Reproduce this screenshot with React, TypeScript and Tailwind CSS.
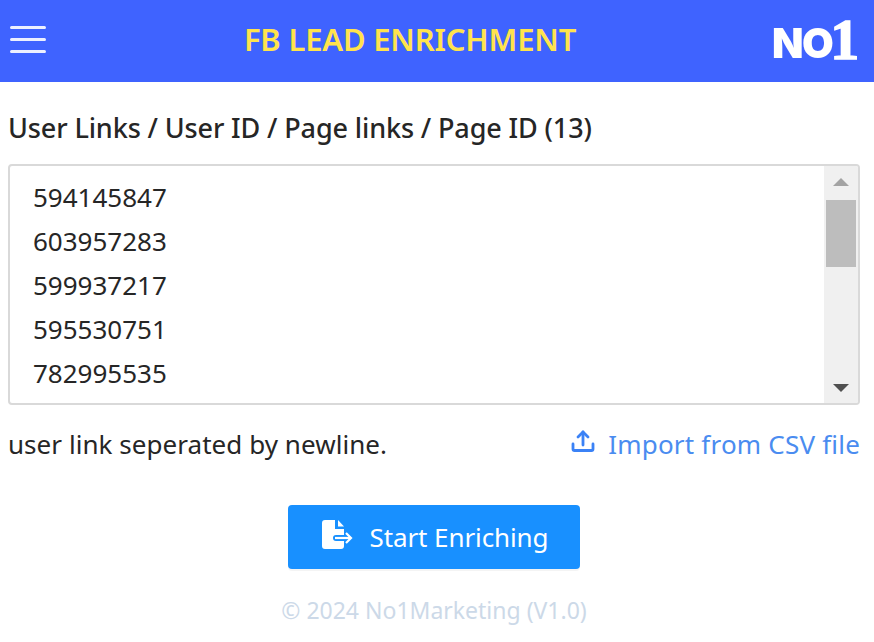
const ids = ["594145847", "603957283", "599937217", "595530751", "782995535"]

function Logo() {
  return (
    <div className="w-[85px] mr-[17px] flex items-end text-white blur-[0.7px] select-none h-[46px]">
      <span className="text-[41px] leading-[44px] font-black font-['Inter',sans-serif] tracking-[-1.5px] mb-[-1px]">NO</span>
      <span className="text-[58px] leading-[50px] font-bold font-['Liberation_Serif',serif] -ml-[2px] mb-[-1px] [-webkit-text-stroke:1.5px_white]">1</span>
    </div>
  )
}

function Scrollbar() {
  return (
    <div className="w-[34px] bg-[#f0f0f0] flex flex-col items-center">
      <div className="h-[34px] w-full flex items-center justify-center">
        <div className="w-0 h-0 border-x-[8px] border-x-transparent border-b-[8px] border-b-[#a3a3a3] -mt-[3px]" />
      </div>
      <div className="w-[30px] h-[67px] bg-[#bdbdbd]" />
      <div className="flex-1" />
      <div className="h-[34px] w-full flex items-center justify-center">
        <div className="w-0 h-0 border-x-[8px] border-x-transparent border-t-[8px] border-t-[#505050] mt-[3px]" />
      </div>
    </div>
  )
}

export default function App() {
  return (
    <div className="w-[874px] h-[642px] bg-white font-['Noto_Sans',sans-serif] text-[#262626] overflow-hidden">
      <header className="h-[82px] bg-[#3f63ff] flex items-center justify-between pl-[10px] pr-0">
        <div className="w-[36px] flex flex-col gap-[9px] -mt-[4px] blur-[0.4px]">
          <span className="h-[3px] bg-white/90 rounded-full" />
          <span className="h-[3px] bg-white/90 rounded-full" />
          <span className="h-[3px] bg-white/90 rounded-full" />
        </div>
        <h1 className="text-[31px] leading-[40px] font-semibold text-[#ffe34d] tracking-[-0.2px] -mt-[4px] ml-[2px]">FB LEAD ENRICHMENT</h1>
        <Logo />
      </header>

      <main className="pl-[8px] pr-[14px]">
        <label className="block mt-[26px] text-[27px] leading-[40px] font-medium tracking-[-0.12px]">
          User Links / User ID / Page links / Page ID (13)
        </label>

        <div className="mt-[16px] h-[241px] border-2 border-[#d9d9d9] rounded-[4px] flex overflow-hidden">
          <textarea
            readOnly
            rows={5}
            value={ids.join("\n")}
            className="flex-1 resize-none overflow-hidden outline-none pl-[23px] pt-[9px] text-[26px] leading-[44px] text-[#262626]"
          />
          <Scrollbar />
        </div>

        <div className="mt-[19px] flex items-center justify-between h-[40px]">
          <span className="text-[26px] leading-[40px] tracking-[0.05px]">user link seperated by newline.</span>
          <a className="flex items-center gap-[13px] text-[26px] leading-[40px] text-[#4a8cf0] tracking-[0.2px]">
            <svg width="24" height="24" viewBox="0 0 24 24" fill="none" stroke="#3b82f6" strokeWidth="2.8" strokeLinecap="round" strokeLinejoin="round" className="-mt-[6px]">
              <path d="M2 15v5a1.5 1.5 0 0 0 1.5 1.5h17A1.5 1.5 0 0 0 22 20v-5" />
              <path d="M12 16V3" />
              <path d="M7 8l5-5 5 5" />
            </svg>
            Import from CSV file
          </a>
        </div>

        <div className="mt-[41px] flex justify-center">
          <button className="w-[292px] h-[64px] bg-[#1890ff] rounded-[4px] text-white text-[26px] tracking-[-0.1px] flex items-center justify-center gap-[16px] pl-[2px] shadow-[0_2px_0_rgba(0,0,0,0.045)]">
            <svg width="32" height="30" viewBox="0 0 32 30" fill="white" className="-mt-[4px]">
              <path d="M3 0h10v9h9v6H14a3 3 0 0 0 0 6h8v5a3 3 0 0 1-3 3H3a3 3 0 0 1-3-3V3a3 3 0 0 1 3-3z" />
              <path d="M16 0l6 6.5h-6z" />
              <path d="M13 18h15" stroke="white" strokeWidth="2.2" fill="none" />
              <path d="M24 13l5 5-5 5" stroke="white" strokeWidth="2.2" fill="none" />
            </svg>
            Start Enriching
          </button>
        </div>

        <p className="mt-[21px] text-center text-[23px] leading-[40px] text-[#ccd9e8]">© 2024 No1Marketing (V1.0)</p>
      </main>
    </div>
  )
}
